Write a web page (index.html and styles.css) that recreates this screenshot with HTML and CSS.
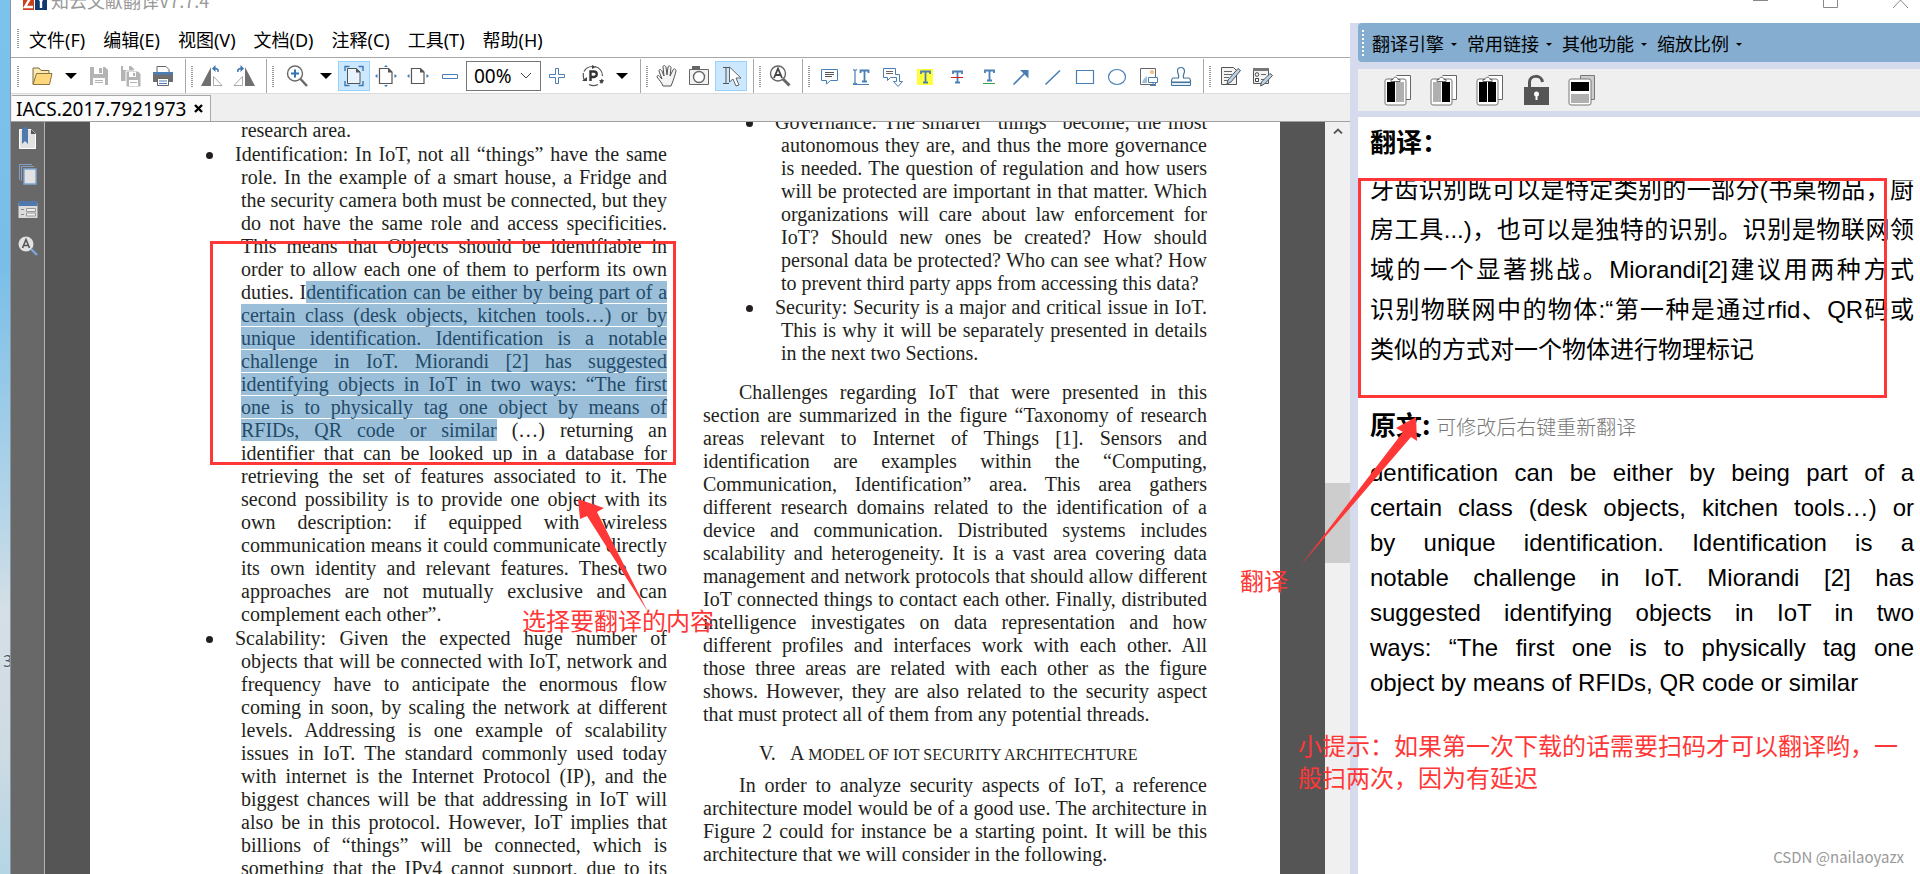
FILE: index.html
```html
<!DOCTYPE html>
<html lang="zh-CN">
<head>
<meta charset="utf-8">
<title>知云文献翻译V7.7.4</title>
<link rel="stylesheet" href="styles.css">
</head>
<body>
<div class="desktop"><span class="desktop-label">3</span></div>
<div class="window">
  <header class="titlebar">
    <svg class="logo" width="24" height="20" viewBox="0 0 24 20"><rect width="11" height="20" fill="#c8401c"/><rect x="12" width="12" height="20" fill="#123a72"/><path d="M2 5h7L2 17h8M14 5l4 6 4-6M18 11v7" fill="none" stroke="#fff" stroke-width="2.4"/></svg>
    <span class="title">知云文献翻译V7.7.4</span>
    <div class="controls">
      <button aria-label="最小化"><svg width="16" height="16" viewBox="0 0 16 16"><path d="M0 8.5h15" stroke="#888" fill="none"/></svg></button>
      <button aria-label="最大化"><svg width="16" height="16" viewBox="0 0 16 16"><path d="M.5.5h14v15H.5z" stroke="#888" fill="none"/></svg></button>
      <button aria-label="关闭"><svg width="16" height="16" viewBox="0 0 16 16"><path d="M0 0l15 16M15 0L0 16" stroke="#888" fill="none"/></svg></button>
    </div>
  </header>
  <div class="main">
    <section class="editor">
      <nav class="menubar">
        <i class="grip"></i>
        <button>文件(F)</button><button>编辑(E)</button><button>视图(V)</button><button>文档(D)</button><button>注释(C)</button><button>工具(T)</button><button>帮助(H)</button>
      </nav>
      <div class="toolbar">
        <div class="group wide">
          <i class="grip"></i>
          <button aria-label="打开"><svg width="22" height="22" viewBox="0 0 22 22"><path d="M2 19V3h6l2 2.5h8V9" fill="#fbe9b4" stroke="#7d6b3c"/><path d="M2 19.500 5.500 8.500H21L18.500 19.500z" fill="#fcd77c" stroke="#8a7440"/></svg></button>
          <button class="drop" aria-label="打开选项"><svg width="12" height="6" viewBox="0 0 12 6"><path d="M0 0h12L6 6z"/></svg></button>
          <button aria-label="保存"><svg width="22" height="22" viewBox="0 0 22 22"><path d="M2 2h15l3 3v15H2z" fill="#b4b4b4"/><path d="M6 2h9v7H6zM5 13h12v7H5z" fill="#fff"/><path d="M11 3h3v5h-3zM7 15h8v1H7zM7 17h8v1H7z" fill="#b4b4b4"/></svg></button>
          <button aria-label="另存为"><svg width="22" height="22" viewBox="0 0 22 22"><path d="M1 1h10l3 3v12H1z" fill="#b4b4b4"/><path d="M3 1h6v4H3z" fill="#fff"/><path d="M6 6h12l3 3v13H6z" fill="#b4b4b4" stroke="#fff"/><path d="M9 7h7v5H9zM9 15h9v6H9z" fill="#fff"/><path d="M13 8h2v3h-2zM10 17h7v1h-7z" fill="#b4b4b4"/></svg></button>
          <button aria-label="打印"><svg width="22" height="22" viewBox="0 0 22 22"><path d="M5 7V1.500h9l3 3V7" fill="#fff" stroke="#666"/><path d="M1 7h20v10H1z" fill="#6f6f6f"/><path d="M1 7h20v2.500H1z" fill="#4a7fb5"/><path d="M5.500 13.500h11v7h-11z" fill="#fff" stroke="#666"/><path d="M7 16h8M7 18.500h8" stroke="#4a7fb5"/></svg></button>
        </div>
        <div class="group">
          <i class="grip"></i>
          <button aria-label="向左旋转"><svg width="22" height="22" viewBox="0 0 22 22"><path d="M10 2v19H0z" fill="#707070"/><path d="M12.500 11.500v9h8.500z" fill="#fff" stroke="#aaa"/><path d="M17 7c1-3-2-4-4-3" fill="none" stroke="#3f77b0" stroke-width="1.500"/><path d="M14.500 0v7L11 3.500z" fill="#3f77b0"/></svg></button>
          <button aria-label="向右旋转"><svg width="22" height="22" viewBox="0 0 22 22"><path d="M12 2v19h10z" fill="#707070"/><path d="M9.500 11.500v9H1z" fill="#fff" stroke="#aaa"/><path d="M5 7c-1-3 2-4 4-3" fill="none" stroke="#3f77b0" stroke-width="1.500"/><path d="M7.500 0v7L11 3.500z" fill="#3f77b0"/></svg></button>
        </div>
        <div class="group wide">
          <i class="grip"></i>
          <button aria-label="放大镜"><svg width="22" height="22" viewBox="0 0 22 22"><circle cx="9" cy="8.500" r="7.500" fill="#fff" stroke="#6a6a6a" stroke-width="1.400"/><path d="M14.500 14l6.500 7" stroke="#6a6a6a" stroke-width="2.500"/><path d="M9 4.500v8M5 8.500h8" stroke="#2f74b5" stroke-width="2"/></svg></button>
          <button class="drop" aria-label="缩放选项"><svg width="12" height="6" viewBox="0 0 12 6"><path d="M0 0h12L6 6z"/></svg></button>
          <button class="active" aria-label="适合页面"><svg width="22" height="22" viewBox="0 0 22 22"><path d="M4.500 3.500h9l3.500 3.500v11.500H4.500z" fill="#e8f3fd" stroke="#555"/><path d="M13 3v4.500h4.500z" fill="#555"/><path d="M2 6V1.500H6.500M15.500 1.500H20V6M2 16v4.500h4.500M15.500 20.500H20V16" fill="none" stroke="#3f77b0" stroke-width="1.400"/></svg></button>
          <button aria-label="实际大小"><svg width="22" height="22" viewBox="0 0 22 22"><path d="M4.500 3.500h9l3.500 3.500v11.500H4.500z" fill="#fff" stroke="#555" stroke-width="1.200"/><path d="M13 3v4.500h4.500z" fill="#555"/><path d="M11 0l2 2H9zM11 22l2-2H9zM0 11l2.500-2v4zM22 11l-2.500-2v4z" fill="#3f77b0"/></svg></button>
          <button aria-label="适合宽度"><svg width="22" height="22" viewBox="0 0 22 22"><path d="M4.500 3.500h9l3.500 3.500v11.500H4.500z" fill="#fff" stroke="#555" stroke-width="1.200"/><path d="M13 3v4.500h4.500z" fill="#555"/><path d="M0 11l2.500-2v4zM22 11l-2.500-2v4z" fill="#3f77b0"/></svg></button>
          <button aria-label="缩小"><svg width="22" height="22" viewBox="0 0 22 22"><path d="M3.500 9.500h15v4h-15z" fill="#fff" stroke="#4a7fb5"/></svg></button>
          <select class="zoom" aria-label="缩放比例"><option>00%</option></select>
          <button aria-label="放大"><svg width="22" height="22" viewBox="0 0 22 22"><path d="M9.500 3.500h3v6h6v3h-6v6h-3v-6h-6v-3h6z" fill="#fff" stroke="#4a7fb5"/></svg></button>
          <button class="spaced" aria-label="旋转页面"><svg width="22" height="22" viewBox="0 0 22 22"><path d="M10 1.500a9.500 9.500 0 0 0-8 5M1.500 8a10 10 0 0 0 1.500 8M7 19.500a10 10 0 0 0 9 0M18 18a10 10 0 0 0 2-4M20.500 11A10 10 0 0 0 13 1.500" fill="none" stroke="#555" stroke-width="1.200"/><path d="M10 0l4 2-4 2zM0 16h5v-4zM17 15h5l-2 4z" fill="#444"/><path d="M8.500 16V6.500H12a2.700 2.700 0 0 1 0 5.500H9" fill="none" stroke="#333" stroke-width="2.400"/></svg></button>
          <button class="drop" aria-label="旋转选项"><svg width="12" height="6" viewBox="0 0 12 6"><path d="M0 0h12L6 6z"/></svg></button>
        </div>
        <div class="group">
          <i class="grip"></i>
          <button aria-label="手形工具"><svg width="22" height="22" viewBox="0 0 22 22"><path d="M7 21c-1-3-3-5-6-9 0-2 2-2 3 0l2 2L3 6c0-2 2-2 3 0l2 5-1-9c0-2 2-2 3 0l1 8 1-8c1-2 3-1 3 1l-1 8 3-6c1-2 3-1 3 1-1 4-2 7-3 10l-2 5z" fill="#f4f4f4" stroke="#555"/></svg></button>
          <button aria-label="快照"><svg width="22" height="22" viewBox="0 0 22 22"><path d="M4 1h8v4H4z" fill="#666"/><path d="M1.500 4.500h19v15h-19z" fill="#f2f2f2" stroke="#666"/><circle cx="11" cy="12" r="5.500" fill="#fff" stroke="#666" stroke-width="1.400"/></svg></button>
          <button class="active" aria-label="选择文本"><svg width="22" height="22" viewBox="0 0 22 22"><path d="M3 2.500h6M6 2.500v16M3 18.500h6" stroke="#555" fill="none"/><path d="M9.500 2v15l3.500-3 3 7 3-1-3-7h5z" fill="#fff" stroke="#666"/></svg></button>
        </div>
        <div class="group">
          <i class="grip"></i>
          <button aria-label="查找"><svg width="22" height="22" viewBox="0 0 22 22"><circle cx="9" cy="8.500" r="7.500" fill="#fff" stroke="#666" stroke-width="1.400"/><path d="M14 14l6.500 6.500" stroke="#666" stroke-width="3"/><path d="M5 13l4-9.500L13 13M6.500 10h5" stroke="#444" stroke-width="1.800" fill="none"/></svg></button>
        </div>
        <div class="group">
          <i class="grip"></i>
          <button aria-label="附注"><svg width="22" height="22" viewBox="0 0 22 22"><path d="M3.500 4.500h16v11h-7L8.500 19v-3.500h-5z" fill="#fff" stroke="#4a7fb5"/><path d="M7 7.500h9M7 9.500h9M7 11.500h7" stroke="#555"/></svg></button>
          <button aria-label="插入文本"><svg width="22" height="22" viewBox="0 0 22 22"><path d="M3 4.500l2 1 2-1M5 5.500v13M3 19l2-1 2 1M3 19.500h16" stroke="#4a7fb5" stroke-width="1.200" fill="none"/><path d="M10.500 8V5.500h8V8M14.500 5.500v11M12 16.500h5" stroke="#4a7fb5" stroke-width="1.800" fill="none"/></svg></button>
          <button aria-label="替换文本"><svg width="22" height="22" viewBox="0 0 22 22"><path d="M1.500 3.500h12v9h-5l-3 3v-3h-4z" fill="#fff" stroke="#4a7fb5"/><path d="M4 6.500h7M4 8.500h7" stroke="#666"/><path d="M13.500 9.500h4v7h3l-4.500 5-4.500-5h3v-4h-3" fill="#fff" stroke="#4a7fb5"/></svg></button>
          <button aria-label="高亮"><svg width="22" height="22" viewBox="0 0 22 22"><path d="M3 4h16v16H3z" fill="#ffff3c"/><path d="M7 9V6.500h9V9M11.500 6.500v11M9 17.500h5" stroke="#4a7fb5" stroke-width="1.800" fill="none"/></svg></button>
          <button aria-label="删除线"><svg width="22" height="22" viewBox="0 0 22 22"><path d="M7 9V6.500h9V9M11.500 6.500v11M9 17.500h5" stroke="#4a7fb5" stroke-width="1.800" fill="none"/><path d="M5 12.500h12" stroke="#e02020"/></svg></button>
          <button aria-label="下划线"><svg width="22" height="22" viewBox="0 0 22 22"><path d="M7 8V5.500h9V8M11.500 5.500v10M9 15.500h5" stroke="#4a7fb5" stroke-width="1.800" fill="none"/><path d="M5 18.500h12" stroke="#3ba04b"/></svg></button>
          <button aria-label="箭头"><svg width="22" height="22" viewBox="0 0 22 22"><path d="M3.500 19.500L15 8" stroke="#4a7fb5" stroke-width="1.600"/><path d="M18.500 5v8.500L10 5z" fill="#4a7fb5"/></svg></button>
          <button aria-label="直线"><svg width="22" height="22" viewBox="0 0 22 22"><path d="M3.500 19.500L18 5.500" stroke="#4a7fb5" stroke-width="1.600"/></svg></button>
          <button aria-label="矩形"><svg width="22" height="22" viewBox="0 0 22 22"><path d="M2.500 5.500h17v13h-17z" fill="none" stroke="#4a7fb5" stroke-width="1.200"/></svg></button>
          <button aria-label="椭圆"><svg width="22" height="22" viewBox="0 0 22 22"><ellipse cx="11" cy="12" rx="8.500" ry="7.500" fill="none" stroke="#4a7fb5" stroke-width="1.200"/></svg></button>
          <button aria-label="图像"><svg width="22" height="22" viewBox="0 0 22 22"><path d="M2.500 3.500h15v16h-15z" fill="#fff" stroke="#666"/><circle cx="14" cy="7" r="2" fill="#efc27a"/><path d="M4 18c1-4 3-5 5-7v7z" fill="#9fbfdc"/><path d="M10.500 12.500h9v5h-9z" fill="#fff" stroke="#4a7fb5"/><path d="M15 18v3M12 20.500h6" stroke="#4a7fb5"/></svg></button>
          <button aria-label="图章"><svg width="22" height="22" viewBox="0 0 22 22"><path d="M8.500 13c1-3-1-4-1-7a3.500 3.500 0 0 1 7 0c0 3-2 4-1 7h5c1.500 0 2 1 2 4h-19c0-3 .5-4 2-4z" fill="#fff" stroke="#41749c" stroke-width="1.200"/><path d="M1.500 17.500h19v3h-19z" fill="#e3eef7" stroke="#41749c"/></svg></button>
        </div>
        <div class="group last">
          <i class="grip"></i>
          <button aria-label="编辑内容"><svg width="22" height="22" viewBox="0 0 22 22"><path d="M2.500 2.500h12l3 3v14h-15z" fill="#f4f4f4" stroke="#555"/><path d="M5 6.500h8M5 9.500h8M5 12.500h5M5 15.500h4" stroke="#666"/><path d="M19 3.500l2.500 2L12 17l-4 2 1-4z" fill="#b9d3ea" stroke="#555"/></svg></button>
          <button aria-label="编辑表单"><svg width="22" height="22" viewBox="0 0 22 22"><path d="M2.500 3.500h15v15h-15z" fill="#f4f4f4" stroke="#555"/><path d="M2 3h16v3H2z" fill="#777"/><circle cx="6" cy="9.500" r="1.800" fill="#fff" stroke="#444"/><path d="M4.500 13.500h3v3h-3z" fill="#fff" stroke="#444"/><path d="M10 9.500h5M10 14.500h3" stroke="#666"/><path d="M19 8.500l2.500 2-8 8.500-4 2 1-4z" fill="#b9d3ea" stroke="#555"/></svg></button>
        </div>
      </div>
      <div class="tabs">
        <div class="tab"><span>IACS.2017.7921973</span><button aria-label="关闭标签"><svg width="9" height="9" viewBox="0 0 9 9"><path d="M1 1l7 7M8 1L1 8" stroke="#000" stroke-width="2.400"/></svg></button></div>
      </div>
      <div class="view">
        <aside class="sidebar">
          <button aria-label="书签"><svg width="20" height="22" viewBox="0 0 20 22"><path d="M1.500 2.500h12l4 4v15h-16z" fill="#e2e2e2" stroke="#fff"/><path d="M13 2v5h5z" fill="#555"/><path d="M4 1c2-1 5-1 6 0v16l-3-3-3 3z" fill="#4f79ad"/></svg></button>
          <button aria-label="缩略图"><svg width="20" height="22" viewBox="0 0 20 22"><path d="M1.500 17V1.500H14M3.500 18V3.500H16" fill="none" stroke="#86a0c4"/><path d="M6 6h12v15H6z" fill="#e2e2e2" stroke="#7fa6d6" stroke-width="1.400"/></svg></button>
          <button aria-label="表单"><svg width="20" height="22" viewBox="0 0 20 22"><path d="M.5 4h19v15H.5z" fill="#dcdcdc"/><path d="M.5 2h19v5H.5z" fill="#4f79ad"/><path d="M3 10.500h3M3 15.500h3" stroke="#888"/><path d="M8.500 9.500h9v3h-9zM8.500 14h9v3h-9z" fill="#eee" stroke="#999"/></svg></button>
          <button aria-label="搜索"><svg width="20" height="22" viewBox="0 0 20 22"><circle cx="8" cy="9" r="7.500" fill="#e2e2e2"/><path d="M13 14l6 6" stroke="#7fa6d6" stroke-width="2.400"/><path d="M4.500 13L8 4.500 11.500 13M6 10.500h4" stroke="#555" stroke-width="1.600" fill="none"/></svg></button>
        </aside>
        <div class="canvas">
          <article class="page">
            <div class="column left">
              <ul>
                <li class="continued"><div class="lines"><span class="end">research area.</span></div></li>
                <li><div class="lines">
                  <span>Identification: In IoT, not all “things” have the same</span>
                  <span>role. In the example of a smart house, a Fridge and</span>
                  <span>the security camera both must be connected, but they</span>
                  <span>do not have the same role and access specificities.</span>
                  <span>This means that Objects should be identifiable in</span>
                  <span>order to allow each one of them to perform its own</span>
                  <span>duties. I<mark>dentification can be either by being part of a</mark></span>
                  <span><mark>certain class (desk objects, kitchen tools…) or by</mark></span>
                  <span><mark>unique identification. Identification is a notable</mark></span>
                  <span><mark>challenge in IoT. Miorandi [2] has suggested</mark></span>
                  <span><mark>identifying objects in IoT in two ways: “The first</mark></span>
                  <span><mark>one is to physically tag one object by means of</mark></span>
                  <span><mark>RFIDs, QR code or similar</mark> (…) returning an</span>
                  <span>identifier that can be looked up in a database for</span>
                  <span>retrieving the set of features associated to it. The</span>
                  <span>second possibility is to provide one object with its</span>
                  <span>own description: if equipped with wireless</span>
                  <span>communication means it could communicate directly</span>
                  <span>its own identity and relevant features. These two</span>
                  <span>approaches are not mutually exclusive and can</span>
                  <span class="end">complement each other”.</span>
                </div></li>
                <li><div class="lines">
                  <span>Scalability: Given the expected huge number of</span>
                  <span>objects that will be connected with IoT, network and</span>
                  <span>frequency have to anticipate the enormous flow</span>
                  <span>coming in soon, by scaling the network at different</span>
                  <span>levels. Addressing is one example of scalability</span>
                  <span>issues in IoT. The standard commonly used today</span>
                  <span>with internet is the Internet Protocol (IP), and the</span>
                  <span>biggest chances will be that addressing in IoT will</span>
                  <span>also be in this protocol. However, IoT implies that</span>
                  <span>billions of “things” will be connected, which is</span>
                  <span>something that the IPv4 cannot support, due to its</span>
                </div></li>
              </ul>
            </div>
            <div class="column right">
              <ul>
                <li><div class="lines">
                  <span>Governance: The smarter “things” become, the most</span>
                  <span>autonomous they are, and thus the more governance</span>
                  <span>is needed. The question of regulation and how users</span>
                  <span>will be protected are important in that matter. Which</span>
                  <span>organizations will care about law enforcement for</span>
                  <span>IoT? Should new ones be created? How should</span>
                  <span>personal data be protected? Who can see what? How</span>
                  <span class="end">to prevent third party apps from accessing this data?</span>
                </div></li>
                <li><div class="lines">
                  <span>Security: Security is a major and critical issue in IoT.</span>
                  <span>This is why it will be separately presented in details</span>
                  <span class="end">in the next two Sections.</span>
                </div></li>
              </ul>
              <p class="lines">
                <span>Challenges regarding IoT that were presented in this</span>
                <span>section are summarized in the figure “Taxonomy of research</span>
                <span>areas relevant to Internet of Things [1]. Sensors and</span>
                <span>identification are examples within the “Computing,</span>
                <span>Communication, Identification” area. This area gathers</span>
                <span>different research domains related to the identification of a</span>
                <span>device and communication. Distributed systems includes</span>
                <span>scalability and heterogeneity. It is a vast area covering data</span>
                <span>management and network protocols that should allow different</span>
                <span>IoT connected things to contact each other. Finally, distributed</span>
                <span>intelligence investigates on data representation and how</span>
                <span>different profiles and interfaces work with each other. All</span>
                <span>those three areas are related with each other as the figure</span>
                <span>shows. However, they are also related to the security aspect</span>
                <span class="end">that must protect all of them from any potential threads.</span>
              </p>
              <h2><span class="num">V.</span>A <small>MODEL OF IOT SECURITY ARCHITECHTURE</small></h2>
              <p class="lines tight">
                <span>In order to analyze security aspects of IoT, a reference</span>
                <span>architecture model would be of a good use. The architecture in</span>
                <span>Figure 2 could for instance be a starting point. It will be this</span>
                <span class="end">architecture that we will consider in the following.</span>
              </p>
            </div>
          </article>
        </div>
        <div class="scrollbar">
          <svg width="10" height="6" viewBox="0 0 10 6"><path d="M1 5.500L5 1.500l4 4" fill="none" stroke="#555" stroke-width="1.800"/></svg>
          <div class="thumb"></div>
        </div>
      </div>
    </section>
    <section class="panel">
      <nav class="panel-menu">
        <i class="dots"></i>
        <button>翻译引擎</button><button>常用链接</button><button>其他功能</button><button>缩放比例</button>
      </nav>
      <div class="panel-tools">
        <button aria-label="左栏"><svg width="28" height="32" viewBox="0 0 28 32"><path d="M12.500 1.500h14v24h-6" fill="#fff" stroke="#666"/><rect x="1" y="5" width="21" height="26" rx="2" fill="#fff" stroke="#777"/><path d="M7 5.500h2c0-3 5-3 5 0h2v2H7z" fill="#fff" stroke="#666"/><path d="M3 8h8v20H3z"/><path d="M12 8h8v20h-8z" fill="#b0b0b0"/></svg></button>
        <button aria-label="右栏"><svg width="28" height="32" viewBox="0 0 28 32"><path d="M12.500 1.500h14v24h-6" fill="#fff" stroke="#666"/><rect x="1" y="5" width="21" height="26" rx="2" fill="#fff" stroke="#777"/><path d="M7 5.500h2c0-3 5-3 5 0h2v2H7z" fill="#fff" stroke="#666"/><path d="M3 8h8v20H3z" fill="#b0b0b0"/><path d="M12 8h8v20h-8z"/></svg></button>
        <button aria-label="双栏"><svg width="28" height="32" viewBox="0 0 28 32"><path d="M12.500 1.500h14v24h-6" fill="#fff" stroke="#666"/><rect x="1" y="5" width="21" height="26" rx="2" fill="#fff" stroke="#777"/><path d="M7 5.500h2c0-3 5-3 5 0h2v2H7z" fill="#fff" stroke="#666"/><path d="M3 8h8v20H3zM12 8h8v20h-8z"/></svg></button>
        <button aria-label="锁定"><svg width="28" height="32" viewBox="0 0 28 32"><path d="M7.500 13V8c0-7 12-8 13 0" fill="none" stroke="#555" stroke-width="3"/><path d="M2 13h25v18H2z" fill="#555"/><circle cx="14.500" cy="20" r="2.500" fill="#fff"/><path d="M13.500 20h2v6h-2z" fill="#fff"/></svg></button>
        <button aria-label="上下布局"><svg width="28" height="32" viewBox="0 0 28 32"><path d="M12.500 1.500h14v24h-6l-8-20z" fill="#ccc" stroke="#777"/><rect x="1" y="5" width="22" height="26" rx="2" fill="#fff" stroke="#777"/><path d="M3 8h18v9H3z"/><path d="M3 20h18v9H3z" fill="#b0b0b0"/></svg></button>
      </div>
      <div class="panel-body">
        <h3>翻译：</h3>
        <div class="translation lines">
          <span>牙齿识别既可以是特定类别的一部分(书桌物品，厨</span>
          <span>房工具...)，也可以是独特的识别。识别是物联网领</span>
          <span>域的一个显著挑战。Miorandi[2]建议用两种方式</span>
          <span>识别物联网中的物体:“第一种是通过rfid、QR码或</span>
          <span class="end">类似的方式对一个物体进行物理标记</span>
        </div>
        <h3 class="source-title">原文: <small>可修改后右键重新翻译</small></h3>
        <div class="source lines">
          <span>dentification can be either by being part of a</span>
          <span>certain class (desk objects, kitchen tools…) or</span>
          <span>by unique identification. Identification is a</span>
          <span>notable challenge in IoT. Miorandi [2] has</span>
          <span>suggested identifying objects in IoT in two</span>
          <span>ways: “The first one is to physically tag one</span>
          <span class="end">object by means of RFIDs, QR code or similar</span>
        </div>
      </div>
    </section>
  </div>
</div>
<div class="annotations">
  <div class="box box-select"></div>
  <div class="box box-result"></div>
  <svg class="arrow arrow-select" width="72" height="116" viewBox="0 0 72 116"><path d="M1 1l26 9-7 4 51 100L10 18l-7 3z" fill="#ff3737"/></svg>
  <svg class="arrow arrow-result" width="120" height="150" viewBox="0 0 120 150"><path d="M1 149L103 16l-7-4 20-11 1 24-6-4z" fill="#ff3737"/></svg>
  <p class="note note-select">选择要翻译的内容</p>
  <p class="note note-result">翻译</p>
  <p class="note note-tip">小提示：如果第一次下载的话需要扫码才可以翻译哟，一<br>般扫两次，因为有延迟</p>
  <p class="watermark">CSDN @nailaoyazx</p>
</div>
</body>
</html>
```
FILE: styles.css
```css
* { box-sizing: border-box; }
body {
  margin: 0;
  height: 100vh;
  display: flex;
  position: relative;
  overflow: hidden;
  background: #fff;
  color: #000;
  font-family: "Noto Sans", "Noto Sans CJK SC", sans-serif;
  font-size: 18px;
}
button {
  font: inherit;
  color: inherit;
  background: none;
  border: 0;
  padding: 0;
  display: flex;
  align-items: center;
  justify-content: center;
}
p, h2, h3, ul { margin: 0; padding: 0; }

.desktop {
  flex: 0 0 11px;
  display: flex;
  align-items: flex-end;
  overflow: hidden;
  padding: 0 0 204px 3px;
  border-right: 1px solid #8796a0;
  background: linear-gradient(#7cc3ec, #79bee8 30%, #b8d6e8 60%, #d5dfe5 70%, #cfdbe2 85%, #b4d5e6);
}
.desktop-label { font-size: 16px; line-height: 18px; color: #3c5a78; text-shadow: 0 0 2px #fff; }

.window { flex: 1; min-width: 0; display: flex; flex-direction: column; }
.titlebar {
  flex: 0 0 23px;
  display: flex;
  align-items: flex-start;
  gap: 4px;
  padding: 0 11px 0 12px;
  overflow: hidden;
  color: #999;
}
.logo { margin-top: -10px; }
.title { line-height: 20px; margin-top: -10px; font-family: "Noto Sans CJK SC", sans-serif; }
.controls { margin: -8px 0 0 auto; display: flex; gap: 54px; }
.main { flex: 1; min-height: 0; display: flex; }

.editor { flex: 1; min-width: 0; display: flex; flex-direction: column; }
.menubar {
  flex: 0 0 35px;
  display: flex;
  align-items: center;
  gap: 18px;
  padding: 0 0 2px 6px;
  border-bottom: 1px solid #a8a8a8;
}
.menubar .grip { height: 20px; margin-right: -8px; }
.grip { width: 2px; background: repeating-linear-gradient(#999 0 1px, #fff 1px 2px); }

.toolbar { flex: 0 0 36px; display: flex; padding-top: 1px; border-bottom: 1px solid #dcdcdc; }
.group { display: flex; align-items: center; padding: 0 6px 0 5px; border-right: 1px solid #a8a8a8; }
.group .grip { height: 21px; margin-right: 3px; }
.group.wide .grip { margin-right: 7px; }
.group.wide:first-child { padding-left: 6px; }
.group.last { border: 0; }
.group button { width: 32px; height: 30px; }
.group .drop { width: 25px; }
.group .spaced { margin-left: 4px; }
.group .active { background: #cce8ff; border: 1px solid #99d1ff; }
.zoom {
  appearance: none;
  width: 75px;
  height: 30px;
  padding: 0 7px;
  border: 1px solid #767676;
  border-radius: 0;
  color: #000;
  font: 19px "Noto Sans", sans-serif;
  background: #fff url("data:image/svg+xml,%3Csvg xmlns='http://www.w3.org/2000/svg' width='12' height='8'%3E%3Cpath d='M1 1l5 5 5-5' fill='none' stroke='%23444'/%3E%3C/svg%3E") no-repeat right 8px center;
}

.tabs { flex: 0 0 28px; display: flex; padding: 1px 0 0 1px; background: #efefef; border-bottom: 1px solid #a0a0a0; }
.tab {
  display: flex;
  align-items: center;
  gap: 8px;
  padding: 0 7px 0 4px;
  background: #fbfbfb;
  border: 1px solid #a8a8a8;
  border-width: 1px 1px 0 0;
}
.tab span { font-size: 19px; line-height: 24px; }

.view { flex: 1; min-height: 0; display: flex; }
.sidebar {
  flex: 0 0 34px;
  display: flex;
  flex-direction: column;
  align-items: center;
  gap: 14px;
  padding-top: 5px;
  background: #686868;
  border-right: 1px solid #b4b4b4;
}
.canvas { flex: 1; min-width: 0; padding: 0 45px; background: #555; }
.page {
  height: 100%;
  display: grid;
  grid-template-columns: 501fr 504fr;
  gap: 36px;
  padding: 0 73px 0 76px;
  overflow: hidden;
  background: #fff;
  color: #231f20;
  font: 20px/23px "Liberation Serif", serif;
}
.column { min-width: 0; }
.column.left { margin-top: -3px; }
.column.right { margin-top: -11px; }
.lines span { display: block; white-space: nowrap; text-align: justify; text-align-last: justify; }
.lines .end { text-align-last: left; }
.column ul { list-style: none; }
.column li { display: flex; padding-left: 40px; }
.column.right li { padding-left: 43px; }
.column li + li { margin-top: 1px; }
.column li::before {
  content: "";
  flex: 0 0 7px;
  height: 7px;
  margin: 9px 28px 0 0;
  border-radius: 50%;
  background: #231f20;
}
.column .continued::before { visibility: hidden; }
.column li .lines { flex: 1; min-width: 0; }
.column li:not(.continued) .lines span:first-child { margin-left: -6px; }
.column mark { background: linear-gradient(#9bbfd9, #9bbfd9) 0 0 / 100% 22px no-repeat; color: #234b69; }
.column p { margin-top: 16px; }
.column p span:first-child { margin-left: 36px; }
.column p.tight { margin-top: 8px; }
.column h2 { margin-top: 16px; padding-left: 56px; font-size: 20px; font-weight: 400; line-height: 23px; }
.column h2 .num { margin-right: 14px; }
.column h2 small { font-size: 16px; }

.scrollbar {
  flex: 0 0 25px;
  display: flex;
  flex-direction: column;
  align-items: center;
  padding-top: 6px;
  background: #f0f0f0;
}
.thumb { width: 100%; height: 80px; margin-top: 349px; background: #cdcdcd; }

.panel {
  flex: 0 0 570px;
  display: flex;
  flex-direction: column;
  gap: 7px;
  padding-left: 8px;
  background: #d5daed;
}
.panel-menu {
  flex: 0 0 39px;
  display: flex;
  align-items: center;
  padding: 1px 0 0 4px;
  gap: 23px;
  background: #85adcf;
  border-radius: 4px 0 0 4px;
  font-family: "Noto Sans CJK SC", sans-serif;
}
.panel-menu button { position: relative; }
.panel-menu button::after {
  content: "";
  position: absolute;
  right: -13px;
  top: 50%;
  border: solid transparent;
  border-width: 3px 3px 0;
  border-top-color: #000;
}
.dots { width: 2px; height: 27px; margin-right: -15px; background: repeating-linear-gradient(#fff 0 2px, transparent 2px 4px); }
.panel-tools {
  flex: 0 0 42px;
  display: flex;
  align-items: center;
  gap: 18px;
  padding-left: 26px;
  margin-bottom: -1px;
  background: #efefef;
}
.panel-body { flex: 1; padding: 5px 6px 0 12px; background: #fff; }
.panel-body h3 { font: bold 26px/38px "Noto Sans CJK SC", sans-serif; }
.translation {
  margin-top: 20px;
  height: 216px;
  overflow: hidden;
  font: 24px/40px "Liberation Sans", "Noto Sans CJK SC", sans-serif;
}
.translation span:first-child { margin-top: -10px; }
.panel-body .source-title { margin-top: 9px; }
.source-title small { font-size: 20px; font-weight: 300; color: #777; }
.source { margin-top: 9px; font: 24px/35px "Liberation Sans", sans-serif; }

.annotations { position: absolute; inset: 0; pointer-events: none; color: #ff3737; }
.box, .arrow, .note, .watermark { position: absolute; }
.box { border: 3px solid #ff3737; }
.box-select { left: 210px; top: 241px; width: 466px; height: 224px; }
.box-result { left: 1358px; top: 178px; width: 529px; height: 220px; }
.arrow-select { left: 577px; top: 498px; }
.arrow-result { left: 1300px; top: 416px; }
.note { font: 24px/32px "Noto Sans CJK SC", sans-serif; white-space: nowrap; }
.note-select { left: 522px; top: 604px; }
.note-result { left: 1240px; top: 564px; }
.note-tip { left: 1298px; top: 729px; }
.watermark { right: 16px; bottom: 6px; font: 15px/22px "Noto Sans CJK SC", sans-serif; color: #999; }
```
